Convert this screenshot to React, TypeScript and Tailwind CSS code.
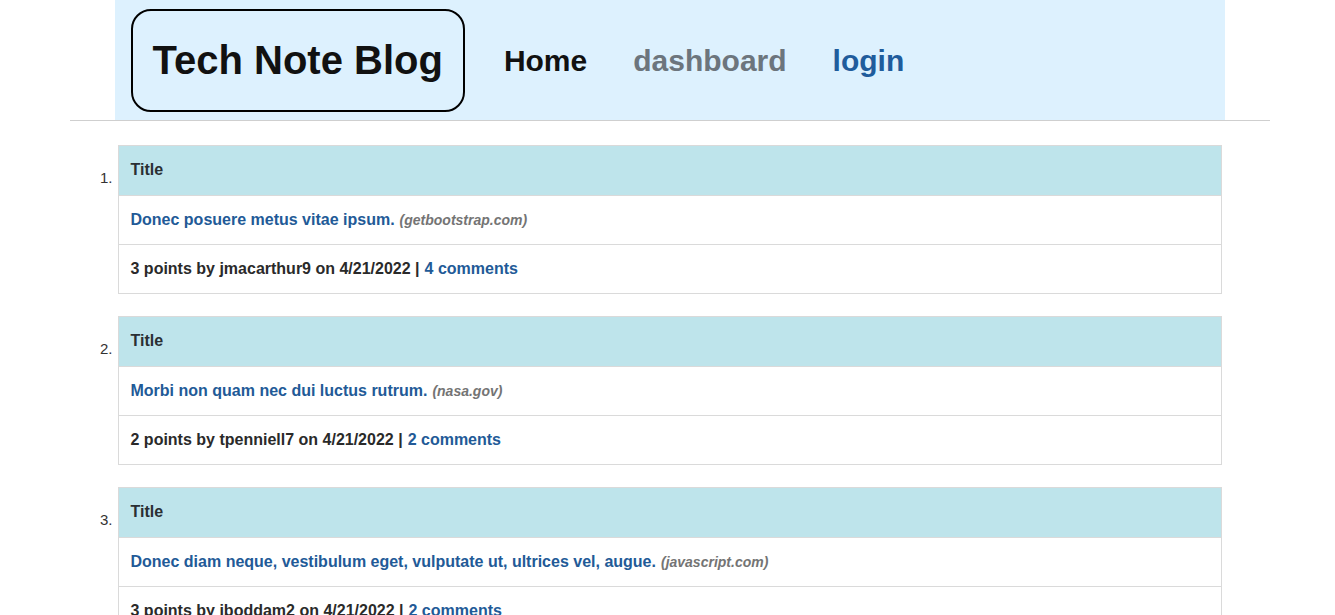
const posts = [
  {
    title: 'Donec posuere metus vitae ipsum.',
    domain: 'getbootstrap.com',
    points: 3,
    user: 'jmacarthur9',
    date: '4/21/2022',
    comments: 4,
  },
  {
    title: 'Morbi non quam nec dui luctus rutrum.',
    domain: 'nasa.gov',
    points: 2,
    user: 'tpenniell7',
    date: '4/21/2022',
    comments: 2,
  },
  {
    title: 'Donec diam neque, vestibulum eget, vulputate ut, ultrices vel, augue.',
    domain: 'javascript.com',
    points: 3,
    user: 'jboddam2',
    date: '4/21/2022',
    comments: 2,
  },
];

export default function App() {
  return (
    <div className="min-h-screen bg-white pl-1 font-['Liberation_Sans',Arial,sans-serif] text-[#212529]">
      <header className="mx-auto w-[1110px] h-[120px] bg-[#ddf1fe] flex items-center pl-4">
        <a
          href="#"
          className="h-[103px] px-[20px] flex items-center border-2 border-black rounded-[20px] text-[40px] font-bold text-[#111]"
        >
          Tech Note Blog
        </a>
        <nav className="flex items-center gap-[46px] ml-[39px] text-[30px] font-bold">
          <a href="#" className="text-[#111]">Home</a>
          <a href="#" className="text-[#6c757d]">dashboard</a>
          <a href="#" className="text-[#1f5c9c]">login</a>
        </nav>
      </header>
      <hr className="mx-auto w-[1200px] border-t border-[#cfcfcf]" />

      <ol className="mx-auto w-[1200px] pt-6 flex flex-col gap-[22px]">
        {posts.map((p, i) => (
          <li key={i} className="flex">
            <span className="w-[48px] pr-[5px] pt-[22px] text-right text-[15px] text-[#333]">
              {i + 1}.
            </span>
            <div className="w-[1104px] border border-[#dadada] text-[16px] font-bold">
              <div className="h-[50px] flex items-center pb-[2px] px-3 bg-[#bee4eb] text-[#2a2f33] border-b border-[#dadada]">
                Title
              </div>
              <div className="h-[49px] flex items-center px-3 border-b border-[#dadada]">
                <a href="#" className="text-[#225a97]">{p.title}</a>
                <span className="ml-[5px] text-[14px] italic text-[#747474]">({p.domain})</span>
              </div>
              <div className="h-[48px] flex items-center px-3 text-[#2a2a2a]">
                {p.points} points by {p.user} on {p.date} |
                <a href="#" className="ml-[5px] text-[#225a97]">{p.comments} comments</a>
              </div>
            </div>
          </li>
        ))}
      </ol>
    </div>
  );
}
